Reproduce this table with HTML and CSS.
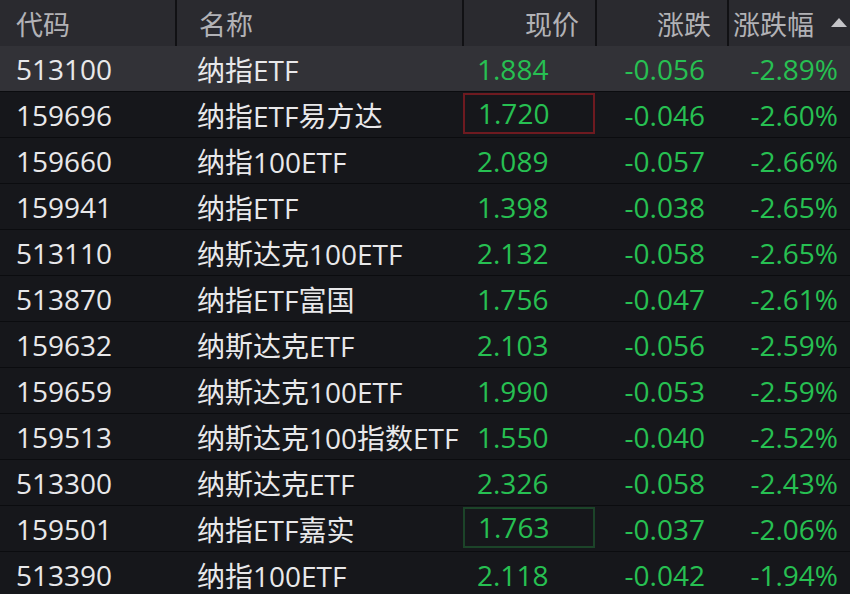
FILE: index.html
```html
<!DOCTYPE html>
<html lang="zh">
<head>
<meta charset="utf-8">
<link rel="stylesheet" href="styles.css">
</head>
<body>
<div class="table">
  <div class="row head">
    <div class="c code">代码</div>
    <div class="c name">名称</div>
    <div class="c price">现价</div>
    <div class="c chg">涨跌</div>
    <div class="c pct sort">涨跌幅<span class="tri"></span></div>
  </div>
  <div class="row sel">
    <div class="c code">513100</div><div class="c name">纳指ETF</div>
    <div class="c price g">1.884</div><div class="c chg g">-0.056</div><div class="c pct g">-2.89%</div>
  </div>
  <div class="row">
    <div class="c code">159696</div><div class="c name">纳指ETF易方达</div>
    <div class="c price g"><span class="box red">1.720</span></div><div class="c chg g">-0.046</div><div class="c pct g">-2.60%</div>
  </div>
  <div class="row">
    <div class="c code">159660</div><div class="c name">纳指100ETF</div>
    <div class="c price g">2.089</div><div class="c chg g">-0.057</div><div class="c pct g">-2.66%</div>
  </div>
  <div class="row">
    <div class="c code">159941</div><div class="c name">纳指ETF</div>
    <div class="c price g">1.398</div><div class="c chg g">-0.038</div><div class="c pct g">-2.65%</div>
  </div>
  <div class="row">
    <div class="c code">513110</div><div class="c name">纳斯达克100ETF</div>
    <div class="c price g">2.132</div><div class="c chg g">-0.058</div><div class="c pct g">-2.65%</div>
  </div>
  <div class="row">
    <div class="c code">513870</div><div class="c name">纳指ETF富国</div>
    <div class="c price g">1.756</div><div class="c chg g">-0.047</div><div class="c pct g">-2.61%</div>
  </div>
  <div class="row">
    <div class="c code">159632</div><div class="c name">纳斯达克ETF</div>
    <div class="c price g">2.103</div><div class="c chg g">-0.056</div><div class="c pct g">-2.59%</div>
  </div>
  <div class="row">
    <div class="c code">159659</div><div class="c name">纳斯达克100ETF</div>
    <div class="c price g">1.990</div><div class="c chg g">-0.053</div><div class="c pct g">-2.59%</div>
  </div>
  <div class="row">
    <div class="c code">159513</div><div class="c name">纳斯达克100指数ETF</div>
    <div class="c price g">1.550</div><div class="c chg g">-0.040</div><div class="c pct g">-2.52%</div>
  </div>
  <div class="row">
    <div class="c code">513300</div><div class="c name">纳斯达克ETF</div>
    <div class="c price g">2.326</div><div class="c chg g">-0.058</div><div class="c pct g">-2.43%</div>
  </div>
  <div class="row">
    <div class="c code">159501</div><div class="c name">纳指ETF嘉实</div>
    <div class="c price g"><span class="box grn">1.763</span></div><div class="c chg g">-0.037</div><div class="c pct g">-2.06%</div>
  </div>
  <div class="row">
    <div class="c code">513390</div><div class="c name">纳指100ETF</div>
    <div class="c price g">2.118</div><div class="c chg g">-0.042</div><div class="c pct g">-1.94%</div>
  </div>
</div>
</body>
</html>
```
FILE: styles.css
```css
html, body {
  margin: 0;
  padding: 0;
  background: #16171b;
}
body {
  width: 850px;
  height: 594px;
  overflow: hidden;
  font-family: "Open Sans", "Noto Sans CJK SC", sans-serif;
  font-size: 28px;
}
.table {
  display: flex;
  flex-direction: column;
}
.row {
  display: grid;
  grid-template-columns: 175px 287px 133px 132px 123px;
  height: 46px;
  box-sizing: border-box;
  border-bottom: 1px solid #0b0c0f;
  color: #e8e8ea;
}
.row.head {
  background: #2a2a2f;
  color: #b2b2b6;
  border-bottom: none;
}
.row.sel {
  background: #323237;
}
.c {
  display: flex;
  align-items: center;
  white-space: nowrap;
  overflow: visible;
  position: relative;
}
.code { padding-left: 16px; }
.name { padding-left: 22px; }
.price { justify-content: flex-start; padding-left: 15px; }
.chg { justify-content: flex-end; padding-right: 22px; }
.pct { justify-content: flex-end; padding-right: 12px; }
.head .c { font-size: 27px; }
.head .c + .c { border-left: 2px solid #111114; }
.head .price { justify-content: flex-end; padding-left: 0; padding-right: 16px; }
.head .chg { padding-right: 16px; }
.head .pct { justify-content: flex-start; padding-left: 4px; padding-right: 0; }
.tri {
  width: 0;
  height: 0;
  border-left: 8px solid transparent;
  border-right: 8px solid transparent;
  border-bottom: 9px solid #c4c4c8;
  margin-left: 17px;
  margin-top: -2px;
}
.g { color: #27c052; }
.price .box {
  display: flex;
  align-items: center;
  box-sizing: border-box;
  margin-left: -14px;
  padding-left: 13px;
  width: 133px;
  height: 41px;
  margin-top: -3px;
}
.box.red { border: 2px solid #6e1a20; }
.box.grn { border: 2px solid #1c4429; }
```
